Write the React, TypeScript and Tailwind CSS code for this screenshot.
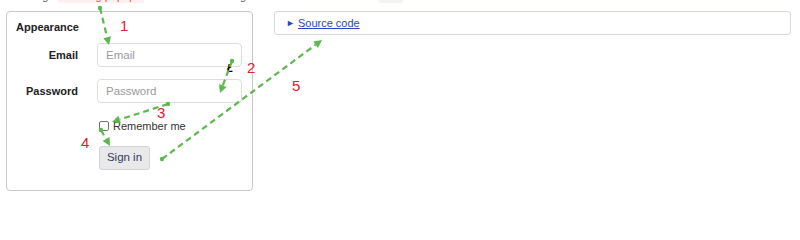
import type { ReactNode } from "react";

const GREEN = "#5cb84c";

type Arrow = { x1: number; y1: number; x2: number; y2: number };

const ARROWS: Arrow[] = [
  { x1: 100, y1: 8, x2: 109, y2: 45 },
  { x1: 232, y1: 61, x2: 220, y2: 93 },
  { x1: 168, y1: 104, x2: 112, y2: 122 },
  { x1: 101, y1: 130, x2: 110, y2: 146 },
  { x1: 162, y1: 159, x2: 322, y2: 40 },
];

const NUMBERS = [
  { n: "1", left: 120, top: 18 },
  { n: "2", left: 247, top: 60 },
  { n: "3", left: 157, top: 105 },
  { n: "4", left: 81, top: 135 },
  { n: "5", left: 292, top: 78 },
];

function DashedArrow({ x1, y1, x2, y2 }: Arrow) {
  const a = Math.atan2(y2 - y1, x2 - x1);
  const len = 8;
  const w = 4;
  const bx = x2 - len * Math.cos(a);
  const by = y2 - len * Math.sin(a);
  const nx = -Math.sin(a) * w;
  const ny = Math.cos(a) * w;
  return (
    <g>
      <circle cx={x1} cy={y1} r={2.2} fill={GREEN} />
      <line x1={x1} y1={y1} x2={bx} y2={by} stroke={GREEN} strokeWidth={2.2} strokeDasharray="6 4" />
      <polygon points={`${x2},${y2} ${bx + nx},${by + ny} ${bx - nx},${by - ny}`} fill={GREEN} />
    </g>
  );
}

function Row({ label, children }: { label: string; children: ReactNode }) {
  return (
    <div className="grid grid-cols-[62px_145px] items-center gap-x-[19px]">
      <span className="text-right text-[11px] font-bold leading-4 text-[#222]">{label}</span>
      {children}
    </div>
  );
}

function Field({ placeholder }: { placeholder: string }) {
  return (
    <input
      type="text"
      placeholder={placeholder}
      className="h-[24px] w-[145px] rounded-[4px] border border-[#dedede] bg-white pl-[8px] text-[11.5px] text-[#333] outline-none placeholder:text-[#9a9a9a]"
    />
  );
}

export default function App() {
  return (
    <div
      className="relative h-[211px] w-[800px] overflow-hidden bg-white"
      style={{ fontFamily: '"Liberation Sans", Arial, sans-serif' }}
    >
      {/* clipped line of the text above */}
      <div className="h-[11px] overflow-hidden">
        <div className="-mt-[10px] flex items-start text-[11px] leading-[13px] text-[#555]">
          <span className="ml-[22px]">using</span>
          <span className="ml-[10px] rounded-[2px] bg-[#fdf0f0] px-[3px] text-[#e05050]">showing popups</span>
          <span className="ml-[76px]">using</span>
          <span className="ml-[133px] h-[13px] w-[24px] rounded-[2px] bg-[#f3f3f3]" />
        </div>
      </div>

      <div className="flex items-start">
        <div className="ml-[6px] flex h-[180px] w-[247px] flex-col rounded-[4px] border border-[#c9c9c9] pl-[9px] pt-[7px]">
          <div className="text-[11px] font-bold leading-4 text-[#222]">Appearance</div>
          <div className="mt-[8px] flex flex-col gap-[12px]">
            <Row label="Email">
              <Field placeholder="Email" />
            </Row>
            <Row label="Password">
              <Field placeholder="Password" />
            </Row>
          </div>
          <div className="ml-[83px] mt-[15px] flex h-[16px] items-center gap-[4px]">
            <span className="h-[10px] w-[10px] rounded-[2px] border border-[#767676] bg-white" />
            <span className="text-[11px] text-[#333]">Remember me</span>
          </div>
          <button
            type="button"
            className="ml-[83px] mt-[12px] h-[24px] w-[51px] rounded-[3px] border border-[#d2d2d6] bg-[#e9e9ec] text-[11.5px] text-[#34405a]"
          >
            Sign in
          </button>
        </div>

        <div className="ml-[21px] flex h-[24px] w-[517px] items-center rounded-[3px] border border-[#d6d8e0] pl-[11px]">
          <span className="text-[9px] leading-none text-[#2a45c0]">►</span>
          <span className="ml-[3px] text-[11px] text-[#2a45c0] underline">Source code</span>
        </div>
      </div>

      <span className="pointer-events-none absolute left-[227px] top-[64px] text-[10px] font-bold italic leading-none text-black">
        Ł
      </span>

      <svg className="pointer-events-none absolute inset-0" width={800} height={211}>
        {ARROWS.map((a, i) => (
          <DashedArrow key={i} {...a} />
        ))}
      </svg>

      {NUMBERS.map((item) => (
        <span
          key={item.n}
          className="pointer-events-none absolute text-[15px] leading-none text-[#e3202a]"
          style={{ left: item.left, top: item.top }}
        >
          {item.n}
        </span>
      ))}
    </div>
  );
}
